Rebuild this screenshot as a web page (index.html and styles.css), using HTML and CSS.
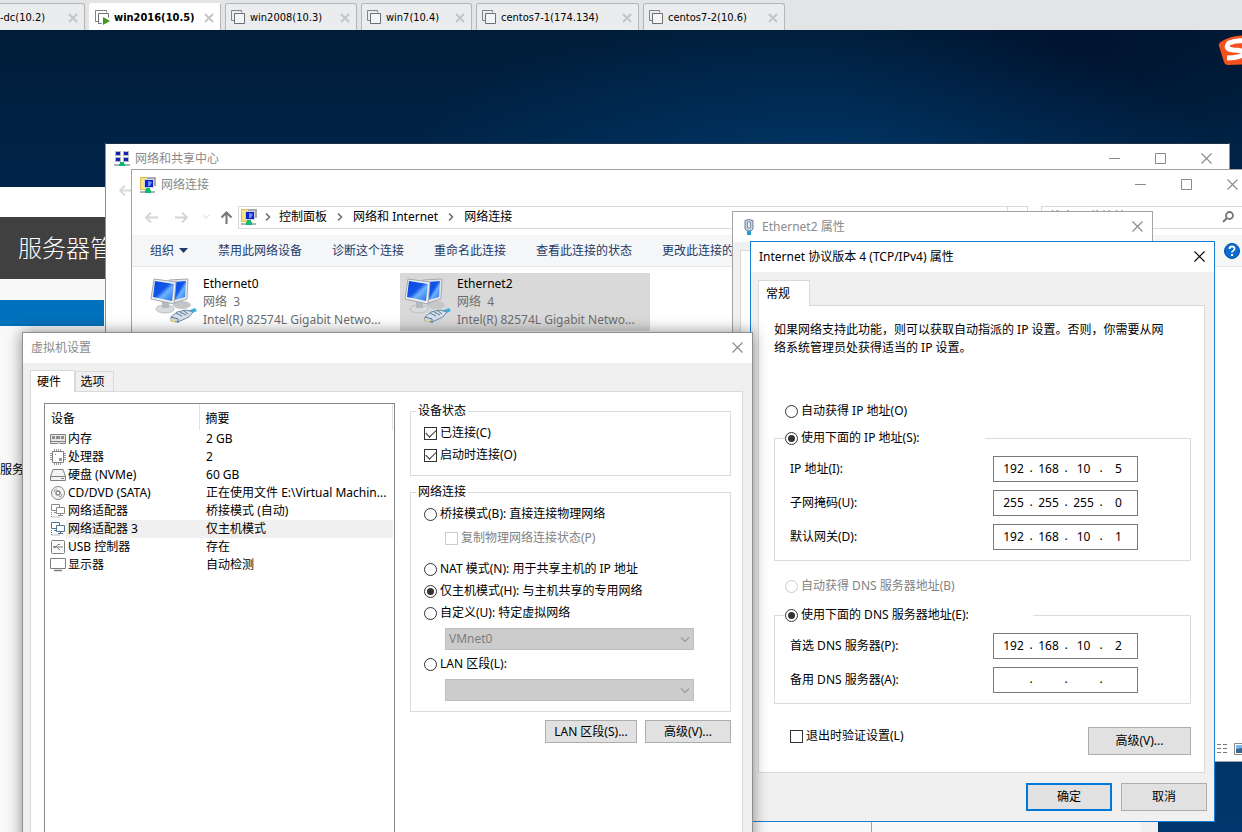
FILE: index.html
```html
<!DOCTYPE html>
<html lang="zh-CN">
<head>
<meta charset="utf-8">
<title>win2016(10.5)</title>
<link rel="stylesheet" href="styles.css">
</head>
<body>
<svg class="defs" aria-hidden="true">
  <symbol id="i-vm" viewBox="0 0 15 15"><path d="M3.5 10.5h-3v-10h10v2" fill="none" stroke="#808285"/><path d="M3.500 3.500h10v10h-10z" fill="#f4f5f6" stroke="#6d6f72"/></symbol>
  <symbol id="i-vmrun" viewBox="0 0 15 15"><path d="M3.500 11.500h-3v-11h11v2" fill="none" stroke="#808285"/><path d="M6.500 13.500h-3v-10h10v4" fill="none" stroke="#6d6f72"/><path d="M8 7l7 4-7 4z" fill="#3f9c12"/></symbol>
  <symbol id="i-tabx" viewBox="0 0 10 10"><path d="M1 1l8 8M9 1l-8 8" stroke="#c3c5c7" stroke-width="2"/></symbol>
  <symbol id="i-close" viewBox="0 0 11 11"><path d="M.5.5l10 10M10.500.5l-10 10" stroke="currentColor" stroke-width="1.100"/></symbol>
  <symbol id="i-max" viewBox="0 0 11 11"><path d="M.5.5h10v10H.5z" fill="none" stroke="currentColor"/></symbol>
  <symbol id="i-min" viewBox="0 0 11 11"><path d="M0 5.500h11" stroke="currentColor"/></symbol>
  <symbol id="i-center" viewBox="0 0 16 16">
    <g fill="#b4b9c0"><path d="M1 0h6v5H1zM9 0h6v5H9zM1 6h6v5H1zM9 6h6v5H9z"/></g>
    <g fill="#1420b8"><path d="M2 1h4v3H2zM10 1h4v3h-4zM2 7h4v3H2zM10 7h4v3h-4z"/></g>
    <path d="M6 11h4v2h1v2H5v-2h1z" fill="#08b873"/><path d="M0 13h5v2H0zM11 13h5v2h-5z" fill="#a9b4b4"/>
  </symbol>
  <symbol id="i-conn" viewBox="0 0 16 16">
    <path d="M.5.500h7v12h-7z" fill="#f8e58a" stroke="#d9bd50"/>
    <path d="M7 0h9v9H7z" fill="#a7abb3"/><path d="M4 2h10v9H4z" fill="#cdd1da"/><path d="M5 3h8v7H5z" fill="#0f22c4"/><path d="M8 4l4 1-2 4-2 0z" fill="#6f92ff"/>
    <path d="M6 11h4v2h1v3H5v-3h1z" fill="#10b874"/><path d="M0 14h5v2H0zM11 14h4v2h-4z" fill="#a9b4b4"/>
  </symbol>
  <symbol id="i-left" viewBox="0 0 13 12"><path d="M6 1L1 6l5 5M1 6h12" fill="none" stroke="currentColor" stroke-width="1.800"/></symbol>
  <symbol id="i-right" viewBox="0 0 13 12"><path d="M7 1l5 5-5 5M12 6H0" fill="none" stroke="currentColor" stroke-width="1.800"/></symbol>
  <symbol id="i-up" viewBox="0 0 13 13"><path d="M1.500 6.500l5-5 5 5M6.500 1.500V13" fill="none" stroke="currentColor" stroke-width="2"/></symbol>
  <symbol id="i-down" viewBox="0 0 10 6"><path d="M1 .5l4 4 4-4" fill="none" stroke="currentColor" stroke-width="1.200"/></symbol>
  <symbol id="i-gt" viewBox="0 0 6 8"><path d="M1 .5L4.500 4 1 7.500" fill="none" stroke="#6b6b6b" stroke-width="1.500"/></symbol>
  <symbol id="i-net" viewBox="0 0 48 48">
    <linearGradient id="g-scr" x1="0" y1="0" x2="1" y2="1"><stop offset="0" stop-color="#0a46d8"/><stop offset=".45" stop-color="#1257ea"/><stop offset=".6" stop-color="#6fb4fa"/><stop offset="1" stop-color="#1f6cf0"/></linearGradient>
    <ellipse cx="32" cy="28" rx="9" ry="4" fill="#c4c6c8"/>
    <path d="M19 3l19-1-1 20-13 4z" fill="#e4e6ea" stroke="#a6a9ae"/><path d="M24 5l12-1-1 16-10 3z" fill="url(#g-scr)"/>
    <ellipse cx="15" cy="32" rx="9" ry="4" fill="#d9dbdd" stroke="#bcbec0"/><path d="M12 25h7v6h-7z" fill="#b7babd"/>
    <path d="M4 2l22 3-2 22L1 22z" fill="#edeff2" stroke="#a3a7ac"/><path d="M5 4l19 3-2 17L3 20z" fill="url(#g-scr)"/>
    <path d="M35 35l10-4 2 3-9 4z" fill="#3bb0e0"/><path d="M21 40l6-5 9-2 7 2-4 5-11 5-7-1z" fill="#d4dfeb" stroke="#6f8aa5"/>
    <path d="M26 36l6 3M30 35l6 3M21 40l7 2v4M33 33l5 4" fill="none" stroke="#577694"/><path d="M21 41l4 2v3l-4-2z" fill="#e6d98c"/>
  </symbol>
  <symbol id="i-plug" viewBox="0 0 10 16"><path d="M1 1.500Q5-.5 9 1.500V10L7 12H3L1 10z" fill="#c5d3e4" stroke="#6d7f99"/><path d="M3.500 3h3v6h-3z" fill="#eef3f8" stroke="#8493a8"/><path d="M3 12h4v4H3z" fill="#1e9fc9"/></symbol>
  <symbol id="i-mem" viewBox="0 0 16 16"><path d="M.5 3.500h15v9h-6l-1-1-1 1h-7z" fill="#e6e6e6" stroke="#848484"/><path d="M2 5h3v3H2zM6 5h4v3H6zM11 5h3v3h-3z" fill="#8c8c8c"/><path d="M1 10.500h14" stroke="#848484"/></symbol>
  <symbol id="i-cpu" viewBox="0 0 16 16"><path d="M4.500 0v16M6.500 0v16M8.500 0v16M10.500 0v16M0 4.500h16M0 6.500h16M0 8.500h16M0 10.500h16" stroke="#999"/><path d="M2.500 2.500h11v11h-11z" fill="#fff" stroke="#808080"/><path d="M5 5h1v1H5zM9 9h3v3H9z" fill="#999"/></symbol>
  <symbol id="i-disk" viewBox="0 0 16 16"><path d="M.5 9.500L3 2.500h10l2.500 7v4H.5zM.5 9.500h15" fill="#f3f3f3" stroke="#808080"/><path d="M11 11.500h3" stroke="#808080"/></symbol>
  <symbol id="i-cd" viewBox="0 0 16 16"><circle cx="8" cy="8" r="6.500" fill="#f6f6f6" stroke="#848484"/><circle cx="8" cy="8" r="2" fill="#fff" stroke="#848484" stroke-width="1.500"/><path d="M4 7q0-3 3-3M12 9q0 3-3 3" fill="none" stroke="#999"/></symbol>
  <symbol id="i-nic" viewBox="0 0 16 16"><path d="M1.500 1.500h8v6h-8z" fill="#fff" stroke="currentColor"/><path d="M6.500 4.500h8v6h-8z" fill="#fff" stroke="currentColor"/><path d="M8 12.500h5M10.500 11v2M4 9.500h2" stroke="currentColor"/><path d="M1.500 9v5h8" fill="none" stroke="currentColor" stroke-dasharray="1 1"/></symbol>
  <symbol id="i-usb" viewBox="0 0 16 16"><rect x="1.500" y="1.500" width="13" height="13" rx="1" fill="#fafafa" stroke="#808080"/><path d="M4 8h9M6 8l2-2.500h2M7 8l2 2.500h1" fill="none" stroke="#808080"/><circle cx="4.500" cy="8" r="1.300" fill="#808080"/></symbol>
  <symbol id="i-mon" viewBox="0 0 16 16"><path d="M.5 1.500h15v10H.5z" fill="#fff" stroke="#808080"/><path d="M4 13.500h8" stroke="#808080" stroke-width="1.500"/></symbol>
</svg>

<nav class="vmtabs">
  <div class="vmtab cut"><span>-dc(10.2)</span><button class="tabx" aria-label="关闭"><svg><use href="#i-tabx"/></svg></button></div>
  <div class="vmtab active"><svg class="vmi"><use href="#i-vmrun"/></svg><span>win2016(10.5)</span><button class="tabx" aria-label="关闭"><svg><use href="#i-tabx"/></svg></button></div>
  <div class="vmtab w2008"><svg class="vmi"><use href="#i-vm"/></svg><span>win2008(10.3)</span><button class="tabx" aria-label="关闭"><svg><use href="#i-tabx"/></svg></button></div>
  <div class="vmtab win7"><svg class="vmi"><use href="#i-vm"/></svg><span>win7(10.4)</span><button class="tabx" aria-label="关闭"><svg><use href="#i-tabx"/></svg></button></div>
  <div class="vmtab c1"><svg class="vmi"><use href="#i-vm"/></svg><span>centos7-1(174.134)</span><button class="tabx" aria-label="关闭"><svg><use href="#i-tabx"/></svg></button></div>
  <div class="vmtab c2"><svg class="vmi"><use href="#i-vm"/></svg><span>centos7-2(10.6)</span><button class="tabx" aria-label="关闭"><svg><use href="#i-tabx"/></svg></button></div>
</nav>

<main class="desktop">
  <svg class="sogou" viewBox="0 0 34 34"><path d="M4 8Q17 1 34 3v28L10 32Q7 32 6 29L1 13Q0 10 4 8z" fill="#f4511e"/><path d="M30 9Q20 6 11 10q-5 6 4 7 11 0 11 3-2 5-17 5" fill="none" stroke="#fff" stroke-width="5"/></svg>

  <section class="win server">
    <div class="srv-title"></div>
    <header class="srv-head">服务器管</header>
    <div class="srv-body">
      <div class="srv-nav"><div class="srv-sel"></div><p>服务</p></div>
      <div class="srv-main"></div>
      <div class="srv-scroll"></div>
    </div>
  </section>

  <section class="win center">
    <header class="title big"><svg class="ti"><use href="#i-center"/></svg><h2>网络和共享中心</h2>
      <div class="wb"><button aria-label="最小化"><svg><use href="#i-min"/></svg></button><button aria-label="最大化"><svg><use href="#i-max"/></svg></button><button aria-label="关闭"><svg><use href="#i-close"/></svg></button></div></header>
    <div class="center-nav"><svg class="arrow"><use href="#i-left"/></svg></div>
  </section>

  <section class="win conns">
    <header class="title big"><svg class="ti"><use href="#i-conn"/></svg><h2>网络连接</h2>
      <div class="wb"><button aria-label="最小化"><svg><use href="#i-min"/></svg></button><button aria-label="最大化"><svg><use href="#i-max"/></svg></button><button aria-label="关闭"><svg><use href="#i-close"/></svg></button></div></header>
    <div class="navrow">
      <div class="arrows">
        <button aria-label="后退"><svg class="arrow"><use href="#i-left"/></svg></button>
        <button aria-label="前进"><svg class="arrow"><use href="#i-right"/></svg></button>
        <button aria-label="历史"><svg class="tiny"><use href="#i-down"/></svg></button>
        <button class="up" aria-label="向上"><svg class="arrow"><use href="#i-up"/></svg></button>
      </div>
      <div class="address"><svg class="ti"><use href="#i-conn"/></svg><svg class="gt"><use href="#i-gt"/></svg><a href="#">控制面板</a><svg class="gt"><use href="#i-gt"/></svg><a href="#">网络和 Internet</a><svg class="gt"><use href="#i-gt"/></svg><a href="#">网络连接</a><button class="refresh" aria-label="刷新"><svg viewBox="0 0 12 12"><path d="M10 4A4.500 4.500 0 1 0 10.500 7M10.500 1v3.500H7" fill="none" stroke="#666" stroke-width="1.500"/></svg></button></div>
      <label class="search"><input type="text" placeholder="搜索“网络连接”" aria-label="搜索"><svg viewBox="0 0 12 12"><circle cx="7.500" cy="4.500" r="3.500" fill="none" stroke="#777" stroke-width="1.800"/><path d="M5 7L1 11" stroke="#777" stroke-width="2"/></svg></label>
    </div>
    <div class="toolbar">
      <button>组织<svg class="caret" viewBox="0 0 9 5"><path d="M0 0h9L4.500 5z" fill="#1e3a66"/></svg></button><button>禁用此网络设备</button><button>诊断这个连接</button><button>重命名此连接</button><button>查看此连接的状态</button><button>更改此连接的设置</button>
      <svg class="help" viewBox="0 0 16 16"><circle cx="8" cy="8" r="7.500" fill="#0a6bd0" stroke="#084f9c"/><path d="M5.500 6q0-2.500 2.500-2.500t2.500 2.200q0 1.300-1.300 2T8 9.500" fill="none" stroke="#fff" stroke-width="1.800"/><path d="M7 11h2v2H7z" fill="#fff"/></svg>
    </div>
    <div class="tiles">
      <div class="tile"><svg><use href="#i-net"/></svg><div><p class="nm">Ethernet0</p><p>网络&nbsp; 3</p><p>Intel(R) 82574L Gigabit Netwo...</p></div></div>
      <div class="tile sel"><svg><use href="#i-net"/></svg><div><p class="nm">Ethernet2</p><p>网络&nbsp; 4</p><p>Intel(R) 82574L Gigabit Netwo...</p></div></div>
    </div>
    <footer class="views"><svg class="vlist" viewBox="0 0 12 12"><path d="M0 1.500h4M6 1.500h4M0 5.500h4M6 5.500h4M0 9.500h4M6 9.500h4" stroke="#777"/></svg><svg class="vbig" viewBox="0 0 14 12"><path d="M.5.500h13v11H.5z" fill="#fff" stroke="#888"/><path d="M2 2h11v8H2z" fill="#7cb6e8"/><path d="M2 6l5-1 6 2v3H2z" fill="#37678c"/></svg></footer>
  </section>

  <section class="win eth">
    <header class="title"><svg class="plug"><use href="#i-plug"/></svg><h2>Ethernet2 属性</h2><button class="x" aria-label="关闭"><svg><use href="#i-close"/></svg></button></header>
    <div class="eth-body"><div class="eth-page"></div></div>
  </section>

  <section class="win ipv4">
    <header class="title"><h2>Internet 协议版本 4 (TCP/IPv4) 属性</h2><button class="x" aria-label="关闭"><svg><use href="#i-close"/></svg></button></header>
    <div class="dlg">
      <div class="tabs"><button class="tab on">常规</button></div>
      <div class="page ip-page">
        <p class="intro">如果网络支持此功能，则可以获取自动指派的 IP 设置。否则，你需要从网络系统管理员处获得适当的 IP 设置。</p>
        <label class="opt out"><input type="radio" name="ip">自动获得 IP 地址(O)</label>
        <fieldset class="ipset">
          <legend class="lip"><label class="opt"><input type="radio" name="ip" checked>使用下面的 IP 地址(S):</label></legend>
          <div class="frow"><label for="ip1">IP 地址(I):</label><div class="ipbox"><input id="ip1" value="192"><i>.</i><input value="168" aria-label="2"><i>.</i><input value="10" aria-label="3"><i>.</i><input value="5" aria-label="4"></div></div>
          <div class="frow"><label for="ip2">子网掩码(U):</label><div class="ipbox"><input id="ip2" value="255"><i>.</i><input value="255" aria-label="2"><i>.</i><input value="255" aria-label="3"><i>.</i><input value="0" aria-label="4"></div></div>
          <div class="frow"><label for="ip3">默认网关(D):</label><div class="ipbox"><input id="ip3" value="192"><i>.</i><input value="168" aria-label="2"><i>.</i><input value="10" aria-label="3"><i>.</i><input value="1" aria-label="4"></div></div>
        </fieldset>
        <label class="opt out dns off"><input type="radio" name="dns" disabled>自动获得 DNS 服务器地址(B)</label>
        <fieldset class="ipset">
          <legend class="ldns"><label class="opt"><input type="radio" name="dns" checked>使用下面的 DNS 服务器地址(E):</label></legend>
          <div class="frow"><label for="ip4">首选 DNS 服务器(P):</label><div class="ipbox"><input id="ip4" value="192"><i>.</i><input value="168" aria-label="2"><i>.</i><input value="10" aria-label="3"><i>.</i><input value="2" aria-label="4"></div></div>
          <div class="frow"><label for="ip5">备用 DNS 服务器(A):</label><div class="ipbox"><input id="ip5" value=""><i>.</i><input value="" aria-label="2"><i>.</i><input value="" aria-label="3"><i>.</i><input value="" aria-label="4"></div></div>
        </fieldset>
        <div class="verify"><label class="opt"><input type="checkbox">退出时验证设置(L)</label><button class="btn">高级(V)...</button></div>
      </div>
      <footer class="actions"><button class="btn primary">确定</button><button class="btn">取消</button></footer>
    </div>
  </section>

  <section class="win vmset">
    <header class="title"><h2>虚拟机设置</h2><button class="x" aria-label="关闭"><svg><use href="#i-close"/></svg></button></header>
    <div class="dlg vm-dlg">
      <div class="tabs"><button class="tab on">硬件</button><button class="tab">选项</button></div>
      <div class="page vm-page">
        <div class="devlist">
          <table>
            <colgroup><col class="col-icon"><col class="col-name"><col></colgroup>
            <thead><tr><th colspan="2">设备</th><th>摘要</th></tr></thead>
            <tbody>
              <tr><td class="ic"><svg><use href="#i-mem"/></svg></td><td>内存</td><td class="s">2 GB</td></tr>
              <tr><td class="ic"><svg><use href="#i-cpu"/></svg></td><td>处理器</td><td class="s">2</td></tr>
              <tr><td class="ic"><svg><use href="#i-disk"/></svg></td><td>硬盘 (NVMe)</td><td class="s">60 GB</td></tr>
              <tr><td class="ic"><svg><use href="#i-cd"/></svg></td><td>CD/DVD (SATA)</td><td class="s">正在使用文件 E:\Virtual Machin...</td></tr>
              <tr><td class="ic"><svg><use href="#i-nic"/></svg></td><td>网络适配器</td><td class="s">桥接模式 (自动)</td></tr>
              <tr class="cur"><td class="ic"><svg><use href="#i-nic"/></svg></td><td>网络适配器 3</td><td class="s">仅主机模式</td></tr>
              <tr><td class="ic"><svg><use href="#i-usb"/></svg></td><td>USB 控制器</td><td class="s">存在</td></tr>
              <tr><td class="ic"><svg><use href="#i-mon"/></svg></td><td>显示器</td><td class="s">自动检测</td></tr>
            </tbody>
          </table>
        </div>
        <div class="opts">
          <fieldset class="vmfs"><legend>设备状态</legend>
            <label class="opt"><input type="checkbox" checked>已连接(C)</label>
            <label class="opt"><input type="checkbox" checked>启动时连接(O)</label>
          </fieldset>
          <fieldset class="vmfs"><legend>网络连接</legend>
            <label class="opt"><input type="radio" name="net">桥接模式(B): 直接连接物理网络</label>
            <label class="opt sub off"><input type="checkbox" disabled>复制物理网络连接状态(P)</label>
            <label class="opt"><input type="radio" name="net">NAT 模式(N): 用于共享主机的 IP 地址</label>
            <label class="opt"><input type="radio" name="net" checked>仅主机模式(H): 与主机共享的专用网络</label>
            <label class="opt"><input type="radio" name="net">自定义(U): 特定虚拟网络</label>
            <div class="combo"><select disabled aria-label="虚拟网络"><option>VMnet0</option></select><svg><use href="#i-down"/></svg></div>
            <label class="opt"><input type="radio" name="net">LAN 区段(L):</label>
            <div class="combo"><select disabled aria-label="LAN 区段"><option></option></select><svg><use href="#i-down"/></svg></div>
          </fieldset>
          <div class="vmbtns"><button class="btn">LAN 区段(S)...</button><button class="btn">高级(V)...</button></div>
        </div>
      </div>
    </div>
  </section>
</main>
</body>
</html>
```

FILE: styles.css
```css
* { box-sizing: border-box; }
html, body { height: 100%; }
body { margin: 0; display: flex; flex-direction: column; overflow: hidden; background: #e3e4e6; color: #000; font: 12px/18px "Noto Sans", "Noto Sans CJK SC", sans-serif; }
button, input, select { font: inherit; color: inherit; }
button { margin: 0; padding: 0; border: 0; background: none; }
h2, p { margin: 0; font-size: 12px; font-weight: 400; }
svg { display: block; flex: none; }
a { color: inherit; text-decoration: none; }
.defs { position: absolute; width: 0; height: 0; }

/* virtual machine tabs */
.vmtabs { display: flex; flex: none; gap: 4px; height: 30px; padding-top: 3px; background: #e3e4e6; }
.vmtab { display: flex; align-items: center; height: 27px; padding: 1px 6px 0 5px; border: 1px solid #b3b5b7; border-bottom: 0; border-radius: 3px 3px 0 0; background: #ebecee; white-space: nowrap; font-family: "DejaVu Sans Condensed", "Noto Sans", sans-serif; font-size: 11px; }
.vmtab span { flex: 1; padding-left: 4px; }
.vmtab.cut { width: 85px; padding-left: 0; border-left: 0; border-radius: 0 3px 0 0; }
.vmtab.cut span { padding-left: 0; }
.vmtab.active { width: 132px; background: #fff; border-color: #fff #b3b5b7 #fff #fff; font-weight: 700; }
.vmtab.w2008 { width: 132px; }
.vmtab.win7 { width: 111px; }
.vmtab.c1 { width: 163px; }
.vmtab.c2 { width: 142px; }
.vmi { width: 15px; height: 15px; }
.tabx svg { width: 10px; height: 10px; }

/* desktop */
.desktop { position: relative; flex: 1; overflow: hidden; background: radial-gradient(ellipse 420px 170px at 810px 150px, rgba(0, 66, 124, .6), transparent), radial-gradient(ellipse 260px 120px at 1080px 20px, rgba(0, 14, 40, .6), transparent), linear-gradient(180deg, #001c38 0, #002346 120px, #00376c 100%); }
.sogou { position: absolute; left: 1218px; top: 3px; width: 34px; height: 34px; }
.win { position: absolute; display: flex; flex-direction: column; background: #fff; }
.title { display: flex; align-items: center; flex: none; height: 30px; padding-left: 8px; background: #fff; color: #8a8a8a; }
.title h2 { flex: 1; }
.ti { width: 16px; height: 16px; }
.title .ti { margin-right: 5px; }
.wb { display: flex; align-self: flex-start; }
.wb button { display: grid; place-items: center; width: 46px; height: 28px; }
.wb svg, .x svg { width: 11px; height: 11px; }
.x { display: grid; place-items: center; align-self: flex-start; width: 30px; height: 28px; }

.server { left: 0; top: 157px; width: 1158px; bottom: -40px; }
.srv-title { height: 30px; flex: none; }
.srv-head { height: 62px; flex: none; padding-left: 18px; background: #404040; color: #fff; font-size: 24px; line-height: 62px; font-weight: 300; }
.srv-body { display: flex; flex: 1; background: #f8f8f8; }
.srv-nav { width: 104px; padding-top: 21px; }
.srv-sel { height: 26px; background: #0071bc; }
.srv-nav p { padding-top: 135px; }
.srv-main { width: 768px; border-right: 1px solid #a0a0a0; }
.srv-scroll { flex: 1; border-right: 17px solid #f0f0f0; }

.center { left: 105px; top: 113px; width: 1125px; height: 600px; border: 1px solid #8e9298; border-top-color: #1c3147; }
.center-nav { padding: 10px 13px; color: #d8d8d8; }
.arrow { width: 13px; height: 13px; }
.tiny { width: 8px; height: 6px; }

.conns { left: 131px; top: 139px; width: 1125px; height: 593px; border: 1px solid #a3a3a3; }
.navrow { display: flex; align-items: center; flex: none; height: 34px; padding: 0 9px 0 13px; }
.arrows { display: flex; align-items: center; width: 93px; gap: 14px; color: #d4d4d4; }
.arrows button { flex: none; }
.arrows button:nth-child(2) { margin-left: 3px; }
.arrows .up { color: #777; margin-left: -4px; }
.address { display: flex; align-items: center; flex: 1; height: 23px; padding-left: 2px; border: 1px solid #d9d9d9; }
.address .gt { width: 6px; height: 8px; margin: 0 10px; }
.address .ti + .gt { margin: 0 8px; }
.refresh { display: grid; place-items: center; width: 20px; height: 21px; margin-left: auto; border-left: 1px solid #d9d9d9; }
.refresh svg { width: 12px; height: 12px; }
.search { display: flex; align-items: center; width: 205px; height: 23px; margin-left: 13px; padding: 0 11px 0 8px; border: 1px solid #d9d9d9; }
.search input { flex: 1; min-width: 0; padding: 0; border: 0; background: none; }
.search input::placeholder { color: #6d6d6d; }
.search svg { width: 12px; height: 12px; }
.toolbar { display: flex; align-items: center; gap: 30px; flex: none; height: 32px; margin-top: 1px; padding: 0 15px 0 18px; border-bottom: 1px solid #e3e6ea; background: #f5f6f8; color: #1e3a66; }
.toolbar button { display: flex; align-items: center; white-space: nowrap; }
.caret { width: 9px; height: 5px; margin-left: 5px; }
.help { width: 16px; height: 16px; margin-left: auto; }
.tiles { display: flex; gap: 4px; flex: 1; align-items: flex-start; padding: 6px 14px; color: #6d6d6d; }
.tile { display: flex; gap: 5px; width: 250px; height: 58px; padding: 2px 4px; white-space: nowrap; }
.tile.sel { background: #d9d9d9; }
.tile svg { width: 48px; height: 48px; margin-top: 2px; }
.nm { color: #000; }
.views { display: flex; gap: 5px; align-items: center; justify-content: flex-end; height: 24px; padding-right: 7px; }
.vlist { width: 12px; height: 12px; }
.vbig { width: 14px; height: 12px; }

.eth { left: 732px; top: 181px; width: 421px; height: 500px; border: 1px solid #a3a3a3; }
.plug { width: 10px; height: 16px; margin: 0 8px 0 3px; }
.eth-body { display: flex; flex: 1; padding: 8px 7px; background: #f0f0f0; }
.eth-page { flex: 1; border: 1px solid #d9d9d9; background: #fff; }

/* shared dialog parts */
.dlg { padding: 8px 9px 10px 7px; background: #f0f0f0; }
.tabs { display: flex; align-items: flex-end; }
.tab { border: 1px solid #d9d9d9; border-bottom: 0; background: #f0f0f0; }
.tab.on { position: relative; z-index: 1; margin-bottom: -1px; background: #fff; }
.page { border: 1px solid #d9d9d9; background: #fff; }
fieldset { min-width: 0; margin: 0; border: 1px solid #dcdcdc; }
legend { height: 16px; padding: 0; line-height: 16px; }
.opt { display: flex; align-items: center; gap: 3px; height: 22px; white-space: nowrap; }
.opt.off { color: #838383; }
.opt input { appearance: none; flex: none; display: grid; place-items: center; width: 13px; height: 13px; margin: 0; border: 1px solid #333; background: #fff; }
.opt input[type="radio"] { border-radius: 50%; }
.opt input[type="radio"]:checked::before { content: ""; width: 7px; height: 7px; border-radius: 50%; background: #333; }
.opt input[type="checkbox"]:checked::before { content: ""; width: 9px; height: 5px; margin-top: -3px; border: solid #333; border-width: 0 0 1px 1px; transform: rotate(-45deg); }
.opt input:disabled { border-color: #ccc; }
.btn { border: 1px solid #adadad; background: #e1e1e1; }

.ipv4 { left: 750px; top: 211px; width: 465px; border: 1px solid #1a7fd4; }
.ipv4 .title { color: #000; }
.ipv4 .tab { width: 52px; height: 26px; padding-right: 12px; }
.ip-page { padding: 15px 13px 17px 15px; }
.intro { margin-right: 20px; }
.opt.out { height: 22px; margin: 43px 0 8px 11px; }
.opt.dns { margin: 14px 0 10px 11px; }
.ipset { display: flex; flex-direction: column; gap: 8px; padding: 10px 52px 10px 15px; }
.ipset legend { margin-left: -5px; }
.ipset .opt { height: 16px; }
.lip { width: 200px; }
.ldns { width: 248px; }
.frow { display: flex; align-items: center; justify-content: space-between; }
.ipbox { display: flex; align-items: center; width: 145px; height: 26px; padding: 0 0 2px 4px; border: 1px solid #7a7a7a; }
.ipbox input { width: 31px; height: 20px; padding: 0; border: 0; background: none; text-align: center; }
.ipbox i { width: 4px; font-style: normal; text-align: center; }
.verify { display: flex; align-items: flex-start; justify-content: space-between; margin-top: 23px; padding-left: 16px; }
.verify .opt { margin-top: -2px; }
.verify .btn { width: 103px; height: 28px; }
.actions { display: flex; justify-content: flex-end; gap: 9px; margin: 10px -2px 0 0; }
.actions .btn { width: 86px; height: 28px; }
.actions .primary { border: 2px solid #0078d7; }

.vmset { left: 22px; top: 302px; width: 731px; bottom: -40px; border: 1px solid #8e8e8e; box-shadow: 0 0 14px rgba(0, 0, 0, .45); }
.vm-dlg { display: flex; flex-direction: column; flex: 1; padding: 7px 9px 9px 7px; }
.vmset .tab { width: 39px; height: 20px; padding-right: 4px; }
.vmset .tab.on { width: 45px; height: 22px; padding-right: 7px; }
.vm-page { display: flex; gap: 15px; flex: 1; padding: 11px 11px 0 13px; }
.devlist { width: 351px; padding-right: 1px; border: 1px solid #828790; }
table { width: 100%; border-collapse: collapse; table-layout: fixed; }
.col-icon { width: 21px; }
.col-name { width: 133px; }
th { height: 26px; padding: 3px 0 0 6px; text-align: left; font-weight: 400; border-right: 1px solid #e2e2e2; }
td { height: 18px; padding: 0 0 0 2px; line-height: 18px; white-space: nowrap; }
.ic { padding: 0 0 0 5px; color: #8a8a8a; }
.ic svg { width: 16px; height: 16px; }
td.s { padding-left: 7px; }
.cur td { background: #f0f0f0; }
.cur td.ic { background: none; color: #4f7697; }
.opts { flex: 1; display: flex; flex-direction: column; gap: 8px; }
.vmfs { display: flex; flex-direction: column; padding: 3px 13px 9px; }
.vmfs legend { margin-left: -8px; padding: 0 2px; }
.vmfs .sub { margin: 2px 0 9px 21px; }
.combo { position: relative; width: 249px; margin: 4px 0 3px 21px; }
.combo:last-child { margin-bottom: 1px; }
.combo select { appearance: none; display: block; width: 100%; height: 22px; padding: 0 3px; border: 1px solid #bfbfbf; border-radius: 0; background: #ccc; color: #7d7d7d; opacity: 1; }
.combo svg { position: absolute; right: 4px; top: 9px; width: 10px; height: 6px; color: #999; }
.vmbtns { display: flex; justify-content: flex-end; gap: 8px; }
.vmbtns .btn { width: 86px; height: 23px; }
.vmbtns .btn:first-child { width: 92px; }
```
